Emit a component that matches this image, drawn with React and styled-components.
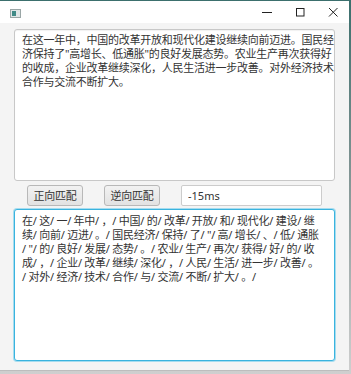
import React from 'react';
import styled, { createGlobalStyle } from 'styled-components';

const GlobalStyle = createGlobalStyle`
    html, body {
        margin: 0;
        padding: 0;
        height: 100%;
        background: linear-gradient(180deg, #3b6f6d 0%, #7f9392 45%, #cfcfcf 100%);
        font-family: "Noto Sans", "Noto Sans CJK SC", sans-serif;
        overflow: hidden;
    }
`;

const Window = styled.div`
    width: 349px;
    height: 370px;
    margin-top: 1px;
    display: flex;
    flex-direction: column;
    background-color: #f4f4f4;
    border-bottom: 1px solid #bdbdbd;
    box-sizing: border-box;
`;

const TitleBar = styled.div`
    height: 22px;
    display: flex;
    align-items: center;
    background-color: #ffffff;
    flex-shrink: 0;
`;

const AppIcon = styled.div`
    width: 30px;
    display: flex;
    justify-content: center;
    padding-top: 3px;
`;

const TitleSpacer = styled.div`
    flex: 1;
`;

const WinButton = styled.div`
    width: 33px;
    height: 22px;
    display: flex;
    align-items: center;
    justify-content: center;
    color: #222;
`;

const Body = styled.div`
    flex: 1;
    display: flex;
    flex-direction: column;
    padding: 6px 14px 0 14px;
`;

const TextArea = styled.textarea`
    display: block;
    width: 321px;
    height: 152px;
    margin: 0;
    box-sizing: border-box;
    resize: none;
    overflow: hidden;
    white-space: pre;
    font-family: "Noto Sans", "Noto Sans CJK SC", sans-serif;
    font-size: 11px;
    letter-spacing: -0.25px;
    line-height: 14px;
    color: #333333;
    background-color: #ffffff;
    border-radius: 3px;
    outline: none;
    border: 1px solid ${(p) => (p.$focused ? '#3ab3de' : '#c8c8c8')};
    box-shadow: ${(p) => (p.$focused ? '0 0 0 1px #a6dcef' : 'inset 0 1px 1px rgba(0,0,0,0.06)')};
    padding: ${(p) => (p.$focused ? '4px 7px' : '3px 7px')};
`;

const ButtonRow = styled.div`
    display: flex;
    align-items: center;
    gap: 21px;
    margin-top: 4px;
    margin-bottom: 3px;
    padding-left: 13px;
    height: 21px;
`;

const MatchButton = styled.button`
    width: 56px;
    height: 21px;
    padding: 0;
    box-sizing: border-box;
    border: 1px solid #b8b8b8;
    border-radius: 3px;
    background: linear-gradient(180deg, #f2f2f2 0%, #e2e2e2 100%);
    font-family: "Noto Sans", "Noto Sans CJK SC", sans-serif;
    font-size: 11px;
    letter-spacing: -0.25px;
    color: #333333;
    line-height: 19px;
`;

const TimeField = styled.input`
    width: 141px;
    height: 21px;
    box-sizing: border-box;
    margin: 0;
    padding: 0 6px;
    border: 1px solid #cccccc;
    border-radius: 2px;
    background-color: #ffffff;
    font-family: "Noto Sans", "Noto Sans CJK SC", sans-serif;
    font-size: 11px;
    color: #333333;
    outline: none;
`;

const sourceText = [
    '在这一年中，中国的改革开放和现代化建设继续向前迈进。国民经',
    '济保持了"高增长、低通胀"的良好发展态势。农业生产再次获得好',
    '的收成，企业改革继续深化，人民生活进一步改善。对外经济技术',
    '合作与交流不断扩大。',
].join('\n');

const splitText = [
    '在/ 这/ 一/ 年中/ ，/ 中国/ 的/ 改革/ 开放/ 和/ 现代化/ 建设/ 继',
    '续/ 向前/ 迈进/ 。/ 国民经济/ 保持/ 了/ "/ 高/ 增长/ 、/ 低/ 通胀',
    '/ "/ 的/ 良好/ 发展/ 态势/ 。/ 农业/ 生产/ 再次/ 获得/ 好/ 的/ 收',
    '成/ ，/ 企业/ 改革/ 继续/ 深化/ ，/ 人民/ 生活/ 进一步/ 改善/ 。',
    '/ 对外/ 经济/ 技术/ 合作/ 与/ 交流/ 不断/ 扩大/ 。/',
].join('\n');

const App = () => {
    return (
        <>
            <GlobalStyle />
            <Window>
                <TitleBar>
                    <AppIcon>
                        <svg width="11" height="9" viewBox="0 0 11 9">
                            <rect x="0.5" y="0.5" width="10" height="8" fill="#dfe6e6" stroke="#9aa6a6" />
                            <rect x="2" y="2" width="4" height="5" fill="#3f8a86" />
                        </svg>
                    </AppIcon>
                    <TitleSpacer />
                    <WinButton>
                        <svg width="10" height="10" viewBox="0 0 10 10">
                            <line x1="0" y1="5.5" x2="10" y2="5.5" stroke="#222" strokeWidth="1" />
                        </svg>
                    </WinButton>
                    <WinButton>
                        <svg width="10" height="10" viewBox="0 0 10 10">
                            <rect x="1.5" y="1.5" width="7.5" height="7.5" fill="none" stroke="#222" strokeWidth="1" />
                        </svg>
                    </WinButton>
                    <WinButton>
                        <svg width="10" height="10" viewBox="0 0 10 10">
                            <path d="M1 1 L9.5 9.5 M9.5 1 L1 9.5" stroke="#222" strokeWidth="1" />
                        </svg>
                    </WinButton>
                </TitleBar>
                <Body>
                    <TextArea readOnly value={sourceText} />
                    <ButtonRow>
                        <MatchButton>正向匹配</MatchButton>
                        <MatchButton>逆向匹配</MatchButton>
                        <TimeField readOnly value="-15ms" />
                    </ButtonRow>
                    <TextArea $focused readOnly value={splitText} />
                </Body>
            </Window>
        </>
    );
};

export default App;
